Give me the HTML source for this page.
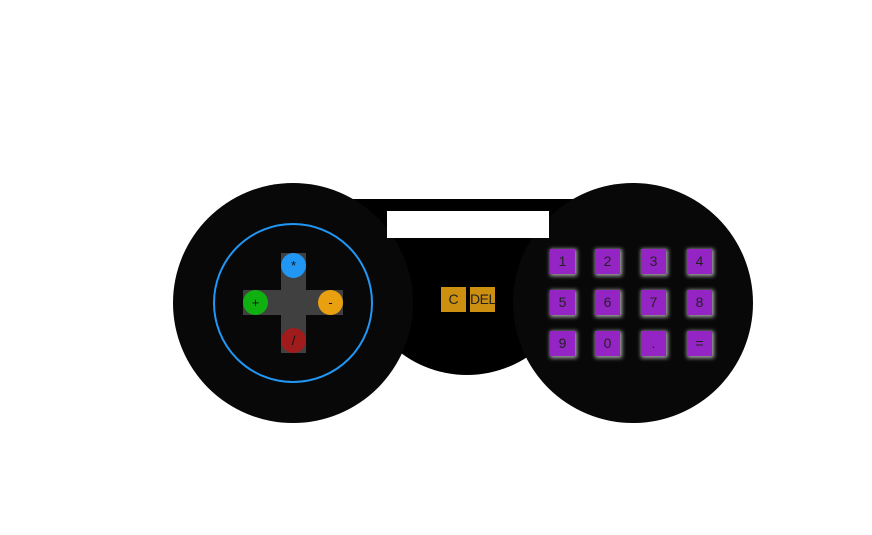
<!DOCTYPE html>
<html><head><style>
body{margin:0;width:872px;height:535px;background:#fff;position:relative;overflow:hidden;font-family:"Liberation Sans",sans-serif;}
div{position:absolute;box-sizing:border-box;}
.mid{left:330px;top:199px;width:280px;height:180px;overflow:hidden;}
.mid .c{left:27px;top:-44px;width:220px;height:220px;border-radius:50%;background:#000;}
.mid .r{left:0;top:0;width:280px;height:70px;background:#000;}
.big{width:240px;height:240px;border-radius:50%;background:#080808;top:183px;}
.rb{width:25px;height:25px;border-radius:50%;font-size:13px;text-align:center;line-height:25px;color:#111;}
.k{width:25px;height:25px;background:#9524c4;box-shadow:1px 1px 4px 1px #aaa;font-size:14px;text-align:center;line-height:25px;color:#222;}
.o{width:25px;height:25px;background:#cc8f10;font-size:14px;text-align:center;line-height:25px;color:#222;top:287px;}
</style></head><body>
<div class="mid"><div class="r"></div><div class="c"></div></div>
<div class="o" style="left:441px">C</div>
<div class="o" style="left:470px;letter-spacing:-0.5px">DEL</div>
<div class="big" style="left:173px"></div>
<div class="big" style="left:513px"></div>
<div style="left:387px;top:211px;width:162px;height:27px;background:#fff"></div>
<div style="left:213px;top:223px;width:160px;height:160px;border-radius:50%;border:2px solid #2196f3"></div>
<div style="left:281px;top:253px;width:25px;height:100px;background:#404040"></div>
<div style="left:243px;top:290px;width:100px;height:25px;background:#404040"></div>
<div class="rb" style="left:281px;top:253px;background:#2196f3">*</div>
<div class="rb" style="left:243px;top:290px;background:#10b010">+</div>
<div class="rb" style="left:318px;top:290px;background:#e8a010">-</div>
<div class="rb" style="left:281px;top:328px;background:#a01c1c">/</div>
<div class="k" style="left:550px;top:249px">1</div>
<div class="k" style="left:595px;top:249px">2</div>
<div class="k" style="left:641px;top:249px">3</div>
<div class="k" style="left:687px;top:249px">4</div>
<div class="k" style="left:550px;top:290px">5</div>
<div class="k" style="left:595px;top:290px">6</div>
<div class="k" style="left:641px;top:290px">7</div>
<div class="k" style="left:687px;top:290px">8</div>
<div class="k" style="left:550px;top:331px">9</div>
<div class="k" style="left:595px;top:331px">0</div>
<div class="k" style="left:641px;top:331px">.</div>
<div class="k" style="left:687px;top:331px">=</div>
</body></html>
